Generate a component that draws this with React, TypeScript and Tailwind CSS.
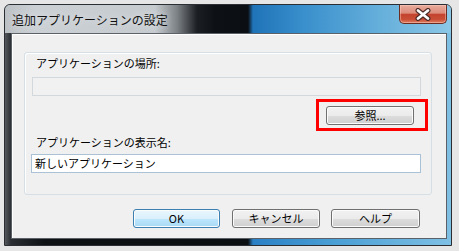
import React from 'react';

const btnBase =
    'h-[19px] rounded-[3px] border text-[11px] leading-none text-black flex items-center justify-center shadow-[inset_0_0_0_1px_#fbfbfb]';
const btnGray =
    'border-[#707070] bg-[linear-gradient(180deg,#f2f2f2_0%,#ebebeb_50%,#dddddd_51%,#cfcfcf_100%)]';
const btnDefault =
    'border-[#3c7fb1] bg-[linear-gradient(180deg,#eaf6fd_0%,#d9f0fc_50%,#bee6fd_51%,#a7d9f5_100%)] shadow-[inset_0_0_0_1px_#c8ecff]';

const CloseButton: React.FC = () => (
    <div className="w-[48px] h-[19px] rounded-b-[5px] border border-t-0 border-[#6b2c22] bg-[linear-gradient(180deg,#e9ab9d_0%,#dc8c7a_45%,#c4442e_52%,#c94e36_80%,#df7f62_100%)] flex items-center justify-center shadow-[inset_0_0_0_1px_rgba(255,210,200,0.45)]">
        <svg width="18" height="13" viewBox="0 0 18 13">
            <path d="M4 2.5 L14 10.5 M14 2.5 L4 10.5" stroke="#4a2a26" strokeWidth="5" strokeLinecap="round" />
            <path d="M4 2.5 L14 10.5 M14 2.5 L4 10.5" stroke="#ffffff" strokeWidth="2.8" strokeLinecap="round" />
        </svg>
    </div>
);

export default function App() {
    return (
        <div className="w-[459px] h-[251px] bg-[#e6e6e6] pt-[4px] pl-[4px] font-['Noto_Sans_CJK_JP',sans-serif]">
            {/* window frame */}
            <div className="w-[448px] h-[242px] border border-[#2b2f33] rounded-t-[6px] flex flex-col bg-[linear-gradient(90deg,#54585c_0px,#2a2d31_6px,#0e1114_40px,#0c0f12_243px,#2a80c4_248px,#4a9fd5_330px,#7fc0e4_446px)] shadow-[inset_0_1px_0_rgba(255,255,255,0.5)]">
                {/* title bar */}
                <div className="h-[28px] flex justify-between items-start rounded-t-[5px] bg-[linear-gradient(90deg,#bcc1c5_0px,#cbd0d4_30px,#c6cbcf_150px,#7d8287_172px,#1b1f24_192px,#0d1014_210px,#0b0e12_243px,#1f73b8_248px,#3a90cc_300px,#68b1dc_380px,#8cc7e6_446px)]">
                    <div className="pl-[7px] pt-[8px] text-[12px] leading-[14px] text-[#111] [text-shadow:0_0_6px_#e8ecef]">
                        追加アプリケーションの設定
                    </div>
                    <div className="mr-[4px]">
                        <CloseButton />
                    </div>
                </div>

                {/* body */}
                <div className="flex-1 flex pl-[6px] pr-[4px] pb-[6px]">
                    <div className="flex-1 border border-[#5b6168] bg-[#f0f0f0] shadow-[inset_1px_1px_0_#ffffff] flex flex-col">
                        {/* group box */}
                        <div className="ml-[12px] mt-[18px] w-[408px] h-[143px] border border-[#d5dfe5] rounded-[3px] shadow-[inset_1px_1px_0_#ffffff] pl-[7px] flex flex-col">
                            <div className="mt-[2px] ml-[4px] text-[11px] leading-[16px] text-black">
                                アプリケーションの場所:
                            </div>
                            <div className="mt-[6px] w-[389px] h-[19px] border border-[#d3d8dc] bg-[#f1f1f1]" />

                            <div className="mt-[3px] w-[396px] flex justify-end">
                                <div className="w-[112px] h-[32px] border-[3px] border-[#ff0000] pl-[7px] pt-[4px]">
                                    <div className={`w-[88px] ${btnBase} ${btnGray} h-[18px]`}>参照...</div>
                                </div>
                            </div>

                            <div className="mt-[3px] ml-[4px] text-[11px] leading-[16px] text-black">
                                アプリケーションの表示名:
                            </div>
                            <div className="mt-[4px] -ml-[1px] w-[390px] h-[19px] border border-[#abc1d6] bg-white pl-[3px] text-[11px] leading-[17px] text-black">
                                新しいアプリケーション
                            </div>
                        </div>

                        {/* buttons */}
                        <div className="mt-[14px] ml-[121px] flex">
                            <div className={`w-[87px] ${btnBase} ${btnDefault}`}>OK</div>
                            <div className={`ml-[12px] w-[88px] ${btnBase} ${btnGray}`}>キャンセル</div>
                            <div className={`ml-[11px] w-[89px] ${btnBase} ${btnGray}`}>ヘルプ</div>
                        </div>
                    </div>
                </div>
            </div>
        </div>
    );
}
